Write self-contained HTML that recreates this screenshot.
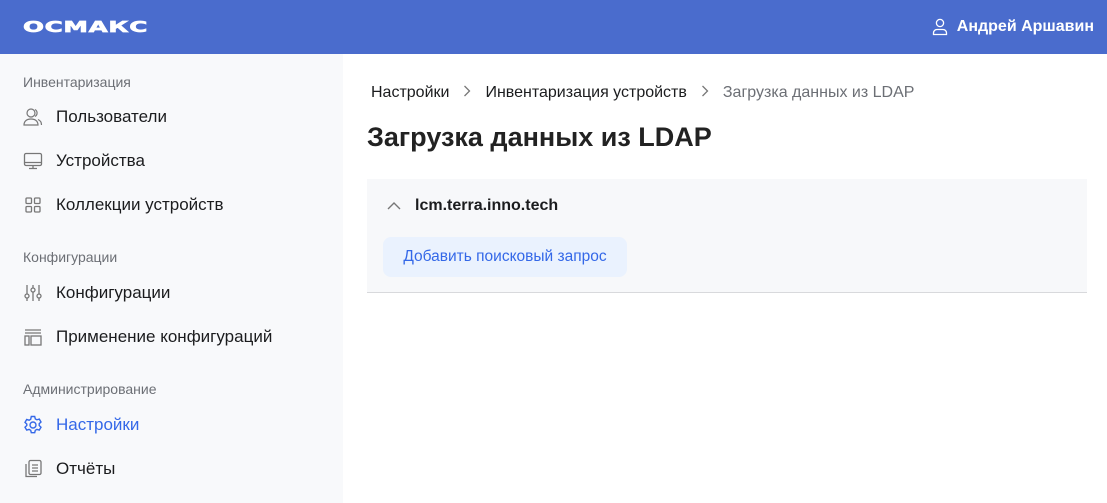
<!DOCTYPE html>
<html><head><meta charset="utf-8"><style>
*{margin:0;padding:0;box-sizing:border-box}
body{width:1107px;height:503px;overflow:hidden;font-family:"Liberation Sans",Arial,sans-serif;background:#fff;position:relative}
.hdr{position:absolute;left:0;top:0;width:1107px;height:54px;background:#4a6ccd;color:#fff}
.logo{position:absolute;left:23px;top:15px;font-size:19px;font-weight:900;letter-spacing:0.5px;font-family:"DejaVu Sans","Liberation Sans",sans-serif;transform:scaleX(1.3) scaleY(0.8);transform-origin:left center;line-height:24px;-webkit-text-stroke:0.8px #fff}
.user{position:absolute;right:13px;top:18px;font-size:16px;font-weight:bold;display:flex;align-items:center;gap:9px}
.side{position:absolute;left:0;top:54px;width:343px;height:449px;background:#f8f9fb}
.sec{position:absolute;left:23px;font-size:14px;color:#6c6f75}
.it{position:absolute;left:23px;font-size:17px;color:#1b1c1e;display:flex;align-items:center;gap:13px}
.it svg{width:20px;height:20px}
.crumb{position:absolute;left:371px;top:84px;font-size:16px;color:#1b1c1e}
.crumb span{display:inline-block;margin:0 14px;vertical-align:middle}
h1{position:absolute;left:367px;top:122px;font-size:27px;font-weight:bold;color:#222}
.card{position:absolute;left:367px;top:179px;width:720px;height:114px;background:#f7f8fa;border-bottom:1px solid #d8d9dc}
.ct{position:absolute;left:48px;top:18px;font-size:16px;font-weight:bold;color:#1b1c1e}
.btn{position:absolute;left:16px;top:58px;width:244px;height:40px;background:#eaf2fe;border-radius:8px;color:#3468e8;font-size:15.5px;line-height:40px;text-align:center}
</style></head><body>
<div class="hdr"><div class="logo">ОСМАКС</div>
<div class="user"><svg width="16" height="18" viewBox="0 0 16 18" fill="none" stroke="#fff" stroke-width="1.3"><circle cx="8" cy="5" r="3.6"/><path d="M1.5 16.5v-1.5c0-2 1.5-3.5 3.5-3.5h6c2 0 3.5 1.5 3.5 3.5v1.5z"/></svg>Андрей Аршавин</div></div>
<div class="side">
<div class="sec" style="top:20px">Инвентаризация</div>
<div class="it" style="top:53px"><svg viewBox="0 0 20 20" fill="none" stroke="#777" stroke-width="1.2"><circle cx="8" cy="6" r="4"/><path d="M1 18c0-4 3-6 7-6s7 2 7 6z"/><path d="M12 2.5a4 4 0 0 1 0 7M15 12.5c2 .8 3.5 2.5 3.5 5.5"/></svg>Пользователи</div>
<div class="it" style="top:97px"><svg viewBox="0 0 20 20" fill="none" stroke="#777" stroke-width="1.3"><rect x="1.5" y="2.5" width="17" height="12" rx="1.5"/><path d="M1.5 11.5h17M10 14.5v3M6 17.5h8"/></svg>Устройства</div>
<div class="it" style="top:141px"><svg viewBox="0 0 20 20" fill="none" stroke="#777" stroke-width="1.3"><rect x="3" y="3" width="5.5" height="5.5" rx="1"/><rect x="11.5" y="3" width="5.5" height="5.5" rx="1"/><rect x="3" y="11.5" width="5.5" height="5.5" rx="1"/><rect x="11.5" y="11.5" width="5.5" height="5.5" rx="1"/></svg>Коллекции устройств</div>
<div class="sec" style="top:195px">Конфигурации</div>
<div class="it" style="top:229px"><svg viewBox="0 0 20 20" fill="none" stroke="#777" stroke-width="1.3"><path d="M4 2v9M4 15v3M10 2v3M10 9v9M16 2v9M16 15v3"/><circle cx="4" cy="13" r="2"/><circle cx="10" cy="7" r="2"/><circle cx="16" cy="13" r="2"/></svg>Конфигурации</div>
<div class="it" style="top:273px"><svg viewBox="0 0 20 20" fill="none" stroke="#777" stroke-width="1.3"><path d="M2 3h16M2 6h16"/><rect x="2" y="9" width="4" height="9"/><rect x="8" y="9" width="10" height="9"/></svg>Применение конфигураций</div>
<div class="sec" style="top:327px">Администрирование</div>
<div class="it" style="top:361px;color:#3468e8"><svg viewBox="0 0 20 20" fill="none" stroke="#3468e8" stroke-width="1.4"><path d="M8.3 1.5h3.4l.6 2.4 1.6.9 2.4-.7 1.7 2.9-1.8 1.7v1.8l1.8 1.7-1.7 2.9-2.4-.7-1.6.9-.6 2.4H8.3l-.6-2.4-1.6-.9-2.4.7-1.7-2.9 1.8-1.7V9.1L2 7.4l1.7-2.9 2.4.7 1.6-.9z"/><circle cx="10" cy="10" r="3"/></svg>Настройки</div>
<div class="it" style="top:405px"><svg viewBox="0 0 20 20" fill="none" stroke="#777" stroke-width="1.3"><rect x="6" y="1.5" width="12" height="14" rx="1.5"/><path d="M3 5v12.5h11M9 6h6M9 9h6M9 12h6"/></svg>Отчёты</div>
</div>
<div class="crumb">Настройки<span><svg width="8" height="12" viewBox="0 0 8 12" fill="none" stroke="#777" stroke-width="1.3"><path d="M1.5 1l5 5-5 5"/></svg></span>Инвентаризация устройств<span><svg width="8" height="12" viewBox="0 0 8 12" fill="none" stroke="#777" stroke-width="1.3"><path d="M1.5 1l5 5-5 5"/></svg></span><b style="font-weight:normal;color:#6c6f75">Загрузка данных из LDAP</b></div>
<h1>Загрузка данных из LDAP</h1>
<div class="card">
<svg style="position:absolute;left:20px;top:22px" width="14" height="9" viewBox="0 0 14 9" fill="none" stroke="#777" stroke-width="1.4"><path d="M1 8l6-6 6 6"/></svg>
<div class="ct">lcm.terra.inno.tech</div>
<div class="btn">Добавить поисковый запрос</div>
</div>
</body></html>
